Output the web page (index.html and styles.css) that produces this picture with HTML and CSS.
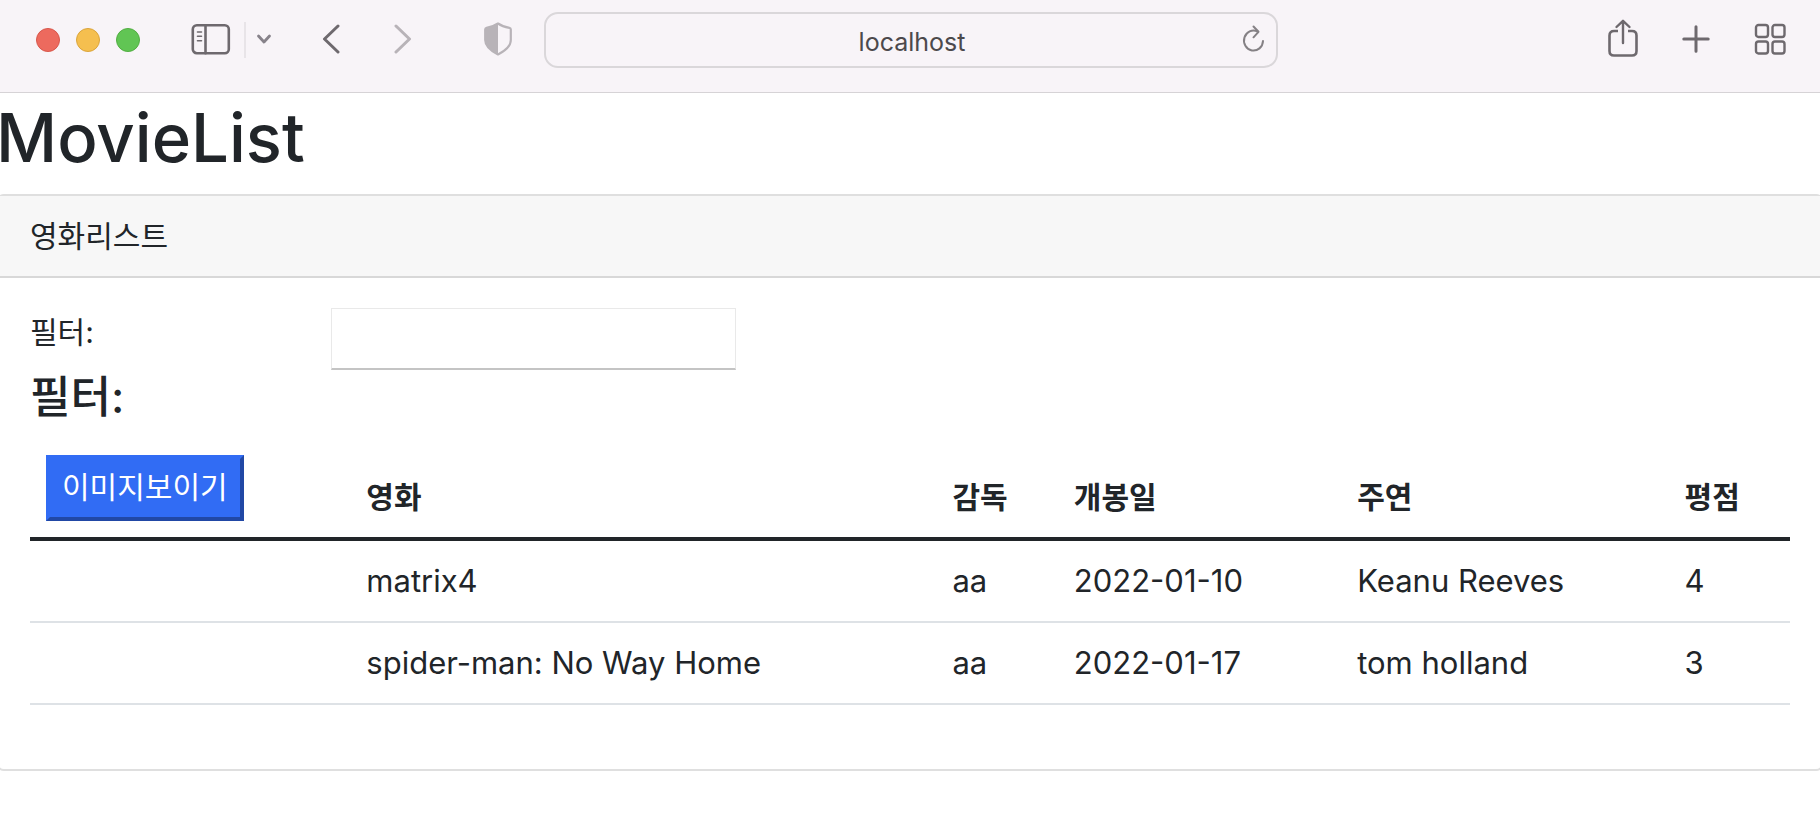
FILE: index.html
```html
<!DOCTYPE html>
<html lang="ko">
<head>
    <meta charset="UTF-8">
    <meta name="viewport" content="width=device-width, initial-scale=1.0">
    <title>MovieList</title>
    <link rel="stylesheet" href="styles.css">
</head>
<body>
    <header class="toolbar">
        <div class="toolbar-left">
            <div class="lights">
                <span class="light red"></span>
                <span class="light yellow"></span>
                <span class="light green"></span>
            </div>
            <div class="sidebar-tools">
                <button class="icon-button" type="button" aria-label="사이드바">
                    <svg width="40" height="32" viewBox="0 0 40 32" fill="none" stroke="currentColor" stroke-width="2.6" stroke-linecap="round">
                        <rect x="1.8" y="2.2" width="36" height="28" rx="4"/>
                        <path d="M14.5 2.2v28"/>
                        <path d="M6.5 9h4M6.5 13.2h4M6.5 17.8h4" stroke-width="1.6"/>
                    </svg>
                </button>
                <span class="divider"></span>
                <button class="icon-button chevron" type="button" aria-label="탭 그룹">
                    <svg width="16" height="12" viewBox="0 0 16 12" fill="none" stroke="currentColor" stroke-width="2.8" stroke-linecap="round" stroke-linejoin="round">
                        <path d="M2.5 3l5.5 6 5.5-6"/>
                    </svg>
                </button>
            </div>
            <div class="history">
                <button class="icon-button" type="button" aria-label="뒤로">
                    <svg width="18" height="30" viewBox="0 0 18 30" fill="none" stroke="currentColor" stroke-width="3" stroke-linecap="round" stroke-linejoin="round">
                        <path d="M16 2L2.5 15 16 28"/>
                    </svg>
                </button>
                <button class="icon-button faded" type="button" aria-label="앞으로">
                    <svg width="18" height="30" viewBox="0 0 18 30" fill="none" stroke="currentColor" stroke-width="3" stroke-linecap="round" stroke-linejoin="round">
                        <path d="M2 2l13.5 13L2 28"/>
                    </svg>
                </button>
            </div>
            <button class="icon-button faded shield" type="button" aria-label="개인정보 보호">
                <svg width="28" height="34" viewBox="0 0 28 34" fill="none" stroke="currentColor" stroke-width="2.2" stroke-linejoin="round">
                    <path d="M14 1.5C10.5 4 6 5.2 2.6 5.8 1.8 6 1.2 6.5 1.2 7.5V18c0 7 6 11 12.8 14.5C20.8 29 26.8 25 26.8 18V7.5c0-1-.6-1.5-1.4-1.7C22 5.2 17.5 4 14 1.5z"/>
                    <path d="M14 1.5C10.5 4 6 5.2 2.6 5.8 1.8 6 1.2 6.5 1.2 7.5V18c0 7 6 11 12.8 14.5z" fill="currentColor" stroke="none"/>
                </svg>
            </button>
        </div>
        <div class="address">
            <input class="address-input" type="text" value="localhost" aria-label="주소">
            <button class="icon-button reload" type="button" aria-label="새로고침">
                <svg width="24" height="28" viewBox="0 0 24 28" fill="none" stroke="currentColor" stroke-width="2" stroke-linecap="round" stroke-linejoin="round">
                    <path d="M21 16A9.5 10 0 1 1 15.5 6.5"/>
                    <path d="M11.5 1.5l5 5.3-5 5.5"/>
                </svg>
            </button>
        </div>
        <div class="toolbar-right">
            <button class="icon-button share" type="button" aria-label="공유">
                <svg width="30" height="38" viewBox="0 0 30 38" fill="none" stroke="currentColor" stroke-width="2.6" stroke-linecap="round" stroke-linejoin="round">
                    <path d="M10 12H6c-2.800 0-4.500 1.500-4.500 4.500v15.500c0 3 1.700 4.500 4.500 4.500h18c2.800 0 4.500-1.500 4.500-4.500V16.500c0-3-1.700-4.500-4.500-4.500h-4" stroke-linecap="butt"/>
                    <path d="M15 24V2.5M8.5 8L15 1.800 21.500 8" stroke-width="2.4"/>
                </svg>
            </button>
            <button class="icon-button" type="button" aria-label="새 탭">
                <svg width="28" height="28" viewBox="0 0 28 28" fill="none" stroke="currentColor" stroke-width="3" stroke-linecap="round">
                    <path d="M14 1.8v24.4M1.8 14h24.4"/>
                </svg>
            </button>
            <button class="icon-button" type="button" aria-label="탭 개요">
                <svg width="32" height="32" viewBox="0 0 32 32" fill="none" stroke="currentColor" stroke-width="2.4">
                    <rect x="2" y="2" width="12" height="12" rx="2.5"/>
                    <rect x="18.5" y="2" width="12" height="12" rx="2.5"/>
                    <rect x="2" y="18.5" width="12" height="12" rx="2.5"/>
                    <rect x="18.5" y="18.5" width="12" height="12" rx="2.5"/>
                </svg>
            </button>
        </div>
    </header>

    <main>
        <h1>MovieList</h1>
        <div class="card">
            <div class="card-header">영화리스트</div>
            <div class="card-body">
                <div class="filter-row">
                    <label for="filter">필터:</label>
                    <input class="filter-input" type="text" id="filter">
                </div>
                <h4>필터:</h4>
                <table class="table">
                    <colgroup>
                        <col class="col-image">
                        <col class="col-title">
                        <col class="col-director">
                        <col class="col-date">
                        <col class="col-actor">
                        <col class="col-rating">
                    </colgroup>
                    <thead>
                        <tr>
                            <th><button class="btn-primary" type="button">이미지보이기</button></th>
                            <th>영화</th>
                            <th>감독</th>
                            <th>개봉일</th>
                            <th>주연</th>
                            <th>평점</th>
                        </tr>
                    </thead>
                    <tbody>
                        <tr>
                            <td></td>
                            <td>matrix4</td>
                            <td>aa</td>
                            <td>2022-01-10</td>
                            <td>Keanu Reeves</td>
                            <td>4</td>
                        </tr>
                        <tr>
                            <td></td>
                            <td>spider-man: No Way Home</td>
                            <td>aa</td>
                            <td>2022-01-17</td>
                            <td>tom holland</td>
                            <td>3</td>
                        </tr>
                    </tbody>
                </table>
            </div>
        </div>
    </main>
</body>
</html>
```
FILE: styles.css
```css
* {
    box-sizing: border-box;
}
body {
    margin: 0;
    font-family: Inter, "Noto Sans CJK KR", sans-serif;
    font-size: 30px;
    line-height: 48px;
    color: #212529;
    background-color: #fff;
    overflow-x: hidden;
}

/* browser toolbar */
.toolbar {
    display: grid;
    grid-template-columns: 544px minmax(0, 1fr) 542px;
    padding: 12px 0 24px;
    background-color: #f8f4f8;
    border-bottom: 1px solid #d6d3d6;
}
.toolbar-left,
.toolbar-right,
.lights,
.sidebar-tools,
.history {
    display: flex;
    align-items: center;
}
.toolbar-left {
    padding-left: 36px;
}
.toolbar-right {
    justify-content: flex-end;
    gap: 44px;
    padding-right: 34px;
}
.lights {
    gap: 16px;
}
.light {
    width: 24px;
    height: 24px;
    border: 1px solid #d8574c;
    border-radius: 50%;
    background-color: #ed6a5e;
}
.yellow {
    border-color: #dba53c;
    background-color: #f5bf4f;
}
.green {
    border-color: #52ae42;
    background-color: #61c554;
}
.icon-button {
    display: flex;
    padding: 0 0 2px;
    border: 0;
    background: none;
    color: #6e696e;
}
.faded {
    color: #b8b3b8;
}
.sidebar-tools {
    margin-left: 51px;
}
.divider {
    width: 2px;
    height: 36px;
    margin: 0 10px 0 13px;
    background-color: #e8e4e8;
}
.chevron {
    color: #87828a;
}
.history {
    gap: 54px;
    margin-left: 50px;
}
.shield {
    margin-left: 72px;
}
.share {
    padding-bottom: 4px;
}
.address {
    display: flex;
    align-items: center;
    height: 56px;
    padding: 0 10px 0 36px;
    border: 2px solid #dad7da;
    border-radius: 14px;
}
.address-input {
    flex: 1;
    min-width: 0;
    padding: 4px 0 0;
    border: 0;
    background: none;
    font: inherit;
    font-size: 25px;
    text-align: center;
    color: #4c494c;
}
.reload {
    color: #858185;
}

/* page */
h1 {
    margin: 6px -4px 18px;
    font-size: 67px;
    font-weight: 500;
    line-height: 77px;
}
.card {
    margin: 0 -4px;
    border: 2px solid #dfdfdf;
    border-radius: 8px;
}
.card-header {
    padding: 16px 32px;
    border-bottom: 2px solid #d8d8d8;
    background-color: #f7f7f7;
}
.card-body {
    padding: 30px 32px 32px;
}
.filter-row {
    display: grid;
    grid-template-columns: 17.1% 1fr;
}
.filter-input {
    width: 405px;
    height: 62px;
    padding: 4px 8px;
    border: 1px solid #e9e9e9;
    border-bottom: 2px solid #c4c4c4;
    background-color: #fff;
    font: inherit;
}
h4 {
    margin: 0 0 15px;
    font-size: 44px;
    font-weight: 500;
    line-height: 54px;
}
.table {
    width: 100%;
    margin-bottom: 32px;
    border-collapse: collapse;
    table-layout: fixed;
}
.table th,
.table td {
    padding: 16px;
    border-bottom: 2px solid #dee2e6;
    text-align: left;
    vertical-align: top;
    white-space: nowrap;
}
.table td {
    font-size: 31px;
}
.table th {
    border-bottom: 4px solid #212529;
    font-weight: bold;
    vertical-align: bottom;
}
.col-image { width: 18.2%; }
.col-title { width: 33.3%; }
.col-director { width: 6.9%; }
.col-date { width: 16.1%; }
.col-actor { width: 18.6%; }
.col-rating { width: 6.9%; }
.btn-primary {
    display: block;
    height: 66px;
    padding: 0 12px 2px;
    border: 4px solid;
    border-color: #316cf4 #2148a5 #2148a5 #316cf4;
    background-color: #316cf4;
    font: inherit;
    font-weight: normal;
    color: #fff;
}
```
